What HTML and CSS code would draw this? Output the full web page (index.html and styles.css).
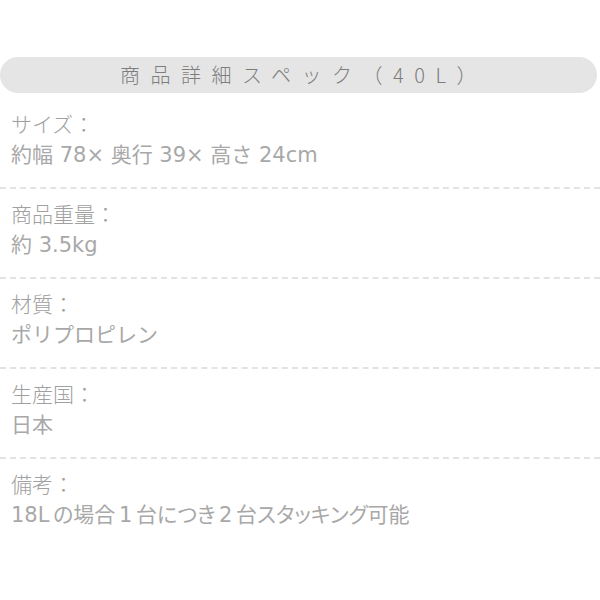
FILE: index.html
```html
<!DOCTYPE html>
<html lang="ja">
<head>
<meta charset="utf-8">
<link rel="stylesheet" href="styles.css">
</head>
<body>
<div class="page">
  <div class="title">商品詳細スペック（40L）</div>
  <div class="specs">
    <div class="spec">
      <div class="label">サイズ：</div>
      <div class="value">約幅 78× 奥行 39× 高さ 24cm</div>
    </div>
    <div class="spec">
      <div class="label">商品重量：</div>
      <div class="value">約 3.5kg</div>
    </div>
    <div class="spec">
      <div class="label">材質：</div>
      <div class="value">ポリプロピレン</div>
    </div>
    <div class="spec">
      <div class="label">生産国：</div>
      <div class="value">日本</div>
    </div>
    <div class="spec last">
      <div class="label">備考：</div>
      <div class="value tight">18L の場合 1 台につき 2 台スタッキング可能</div>
    </div>
  </div>
</div>
</body>
</html>
```
FILE: styles.css
```css
html, body {
  margin: 0;
  padding: 0;
  background: #fff;
}
.page {
  width: 600px;
  padding-top: 57px;
  font-family: "DejaVu Sans", "Noto Sans CJK JP", sans-serif;
  color: #a8a8a8;
}
.title {
  width: 597px;
  height: 36px;
  box-sizing: border-box;
  border-radius: 18px;
  background: #e5e5e5;
  color: #7d7d7d;
  font-family: "Noto Sans CJK JP", sans-serif;
  font-size: 20px;
  line-height: 36px;
  text-align: center;
  letter-spacing: 10.5px;
  padding-left: 10px;
  font-weight: 300;
}
.specs {
  margin-top: 6px;
}
.spec {
  padding: 8px 0 0 11px;
  height: 80px;
  border-bottom: 2px dashed #e3e3e3;
}
.spec.last {
  border-bottom: none;
}
.label, .value {
  font-size: 21px;
  line-height: 32px;
  font-weight: 400;
  white-space: nowrap;
}
.label {
  font-family: "Noto Sans CJK JP", sans-serif;
  font-weight: 300;
  color: #a0a0a0;
}
.value.tight {
  font-feature-settings: "palt";
  word-spacing: -3px;
}
```
